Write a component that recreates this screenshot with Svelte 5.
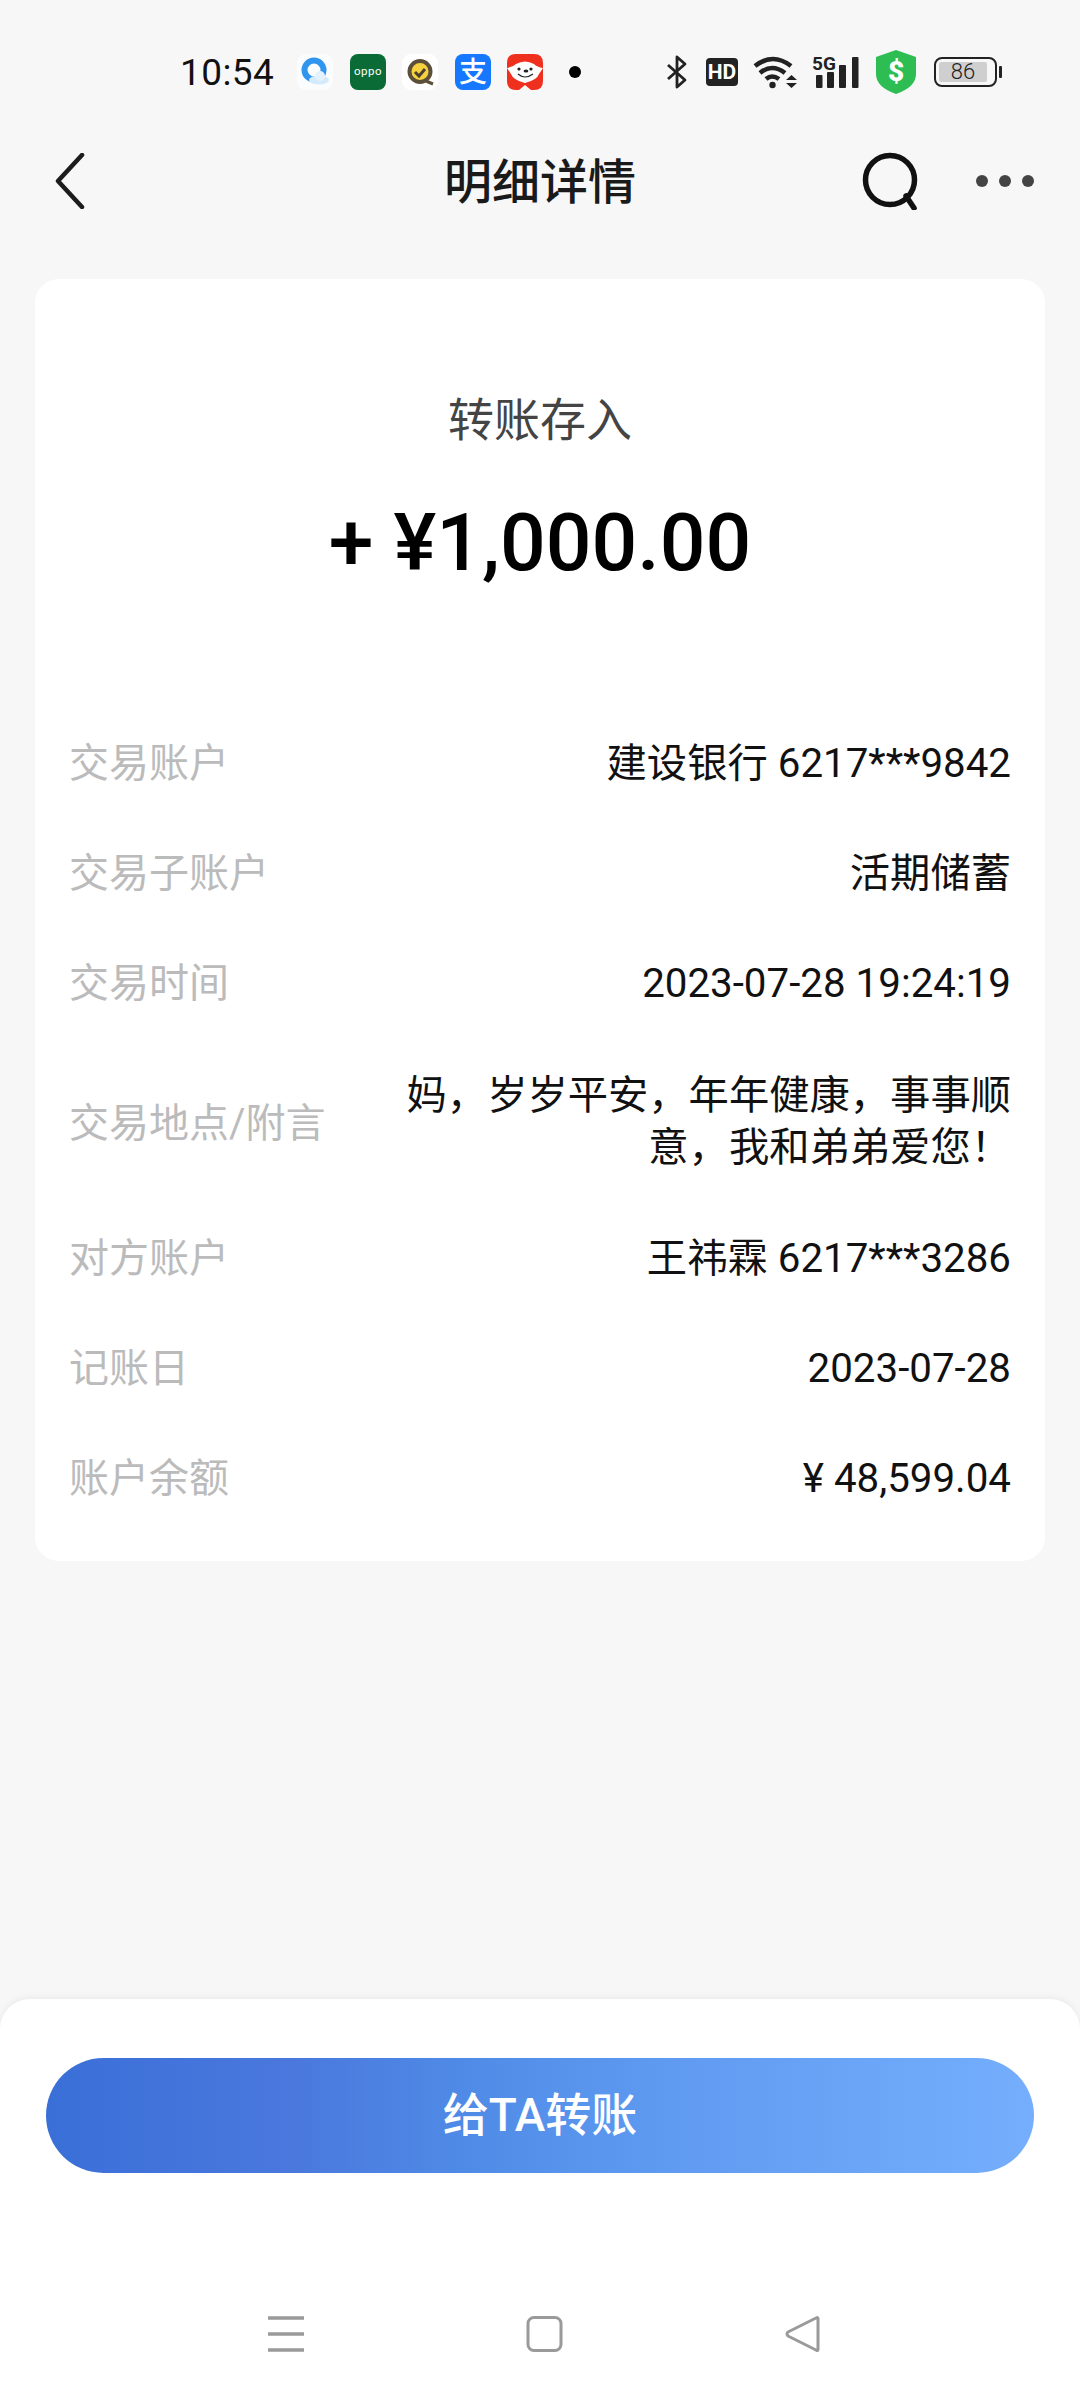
<script>
  const rows = [
    { label: '交易账户', value: '建设银行 6217***9842' },
    { label: '交易子账户', value: '活期储蓄' },
    { label: '交易时间', value: '2023-07-28 19:24:19' },
    { label: '交易地点/附言', value: '妈，岁岁平安，年年健康，事事顺意，我和弟弟爱您！', tall: true },
    { label: '对方账户', value: '王祎霖 6217***3286' },
    { label: '记账日', value: '2023-07-28' },
    { label: '账户余额', value: '¥ 48,599.04' }
  ];
</script>

<div class="page">
  <div class="status">
    <span class="time">10:54</span>
    <div class="apps">
      <svg class="app" viewBox="0 0 36 36">
        <rect width="36" height="36" rx="9" fill="#fbfcfe" />
        <circle cx="17" cy="16" r="9.5" fill="none" stroke="#2f95ee" stroke-width="6" />
        <ellipse cx="22" cy="26" rx="10" ry="4.5" fill="#d5ebfb" />
        <circle cx="23" cy="22" r="5" fill="#e4f2fc" />
      </svg>
      <svg class="app" viewBox="0 0 36 36">
        <rect width="36" height="36" rx="8" fill="#0b6b36" />
        <text x="18" y="21" class="oppo" text-anchor="middle">oppo</text>
      </svg>
      <svg class="app" viewBox="0 0 36 36">
        <rect width="36" height="36" rx="9" fill="#fff" />
        <circle cx="18" cy="17.5" r="10.5" fill="#f6d13f" stroke="#5c4f3a" stroke-width="4" />
        <path d="M13 18l4 4 6-7" fill="none" stroke="#4a3f30" stroke-width="3" />
        <path d="M24 27l7 3" stroke="#5c4f3a" stroke-width="3" />
      </svg>
      <svg class="app" viewBox="0 0 36 36">
        <rect width="36" height="36" rx="8" fill="#1677ff" />
        <text x="18" y="28" class="ali" text-anchor="middle">支</text>
      </svg>
      <svg class="app" viewBox="0 0 36 36">
        <path d="M9 0h18q9 0 9 9v18q0 9-9 9h-3l-6-5-6 5H9q-9 0-9-9V9q0-9 9-9z" fill="#f0301e" />
        <path d="M0 14q6-1 9-4 9-5 18 0 3 3 9 4l-4 6q-2 6-14 9-12-3-14-9z" fill="#fff" />
        <circle cx="12" cy="15" r="1.6" fill="#222" />
        <circle cx="24" cy="15" r="1.6" fill="#222" />
        <ellipse cx="19" cy="17" rx="2.4" ry="1.6" fill="#222" />
        <path d="M11 20q7 6 15 0" fill="none" stroke="#222" stroke-width="1.2" />
      </svg>
      <span class="dot"></span>
    </div>

    <div class="sys">
      <svg class="bt" viewBox="0 0 22 34">
        <path d="M2 10l17 15-8 7V2l8 7L2 24" fill="none" stroke="#222" stroke-width="2.8" stroke-linejoin="round" />
      </svg>
      <span class="hd">HD</span>
      <svg class="wifi" viewBox="0 0 46 34">
        <path d="M2 11q18-14 36 0M7 18q12-10 25 0M13 24q6-5 13 0" fill="none" stroke="#222" stroke-width="4.6" />
        <circle cx="19.5" cy="30" r="3.2" fill="#222" />
        <path d="M33 25h11l-5.500-5zM33 28h11l-5.500 5z" fill="#222" />
      </svg>
      <svg class="sig" viewBox="0 0 48 34">
        <text x="0" y="15" class="five">5G</text>
        <rect x="4" y="20" width="6.500" height="13" rx="1" fill="#222" />
        <rect x="15" y="17" width="7" height="16" rx="1" fill="#222" />
        <rect x="27" y="10" width="7" height="23" rx="1" fill="#222" />
        <rect x="40" y="2" width="6.500" height="31" rx="1" fill="#222" />
      </svg>
      <svg class="shield" viewBox="0 0 40 44">
        <path d="M20 0l20 7v17q0 13-20 20Q0 37 0 24V7z" fill="#2dbd52" />
        <text x="20" y="31" class="usd" text-anchor="middle">$</text>
      </svg>
      <div class="battery">
        <div class="cell"><span>86</span></div>
      </div>
      <span class="nub"></span>
    </div>
  </div>

  <header class="bar">
    <svg class="back" viewBox="0 0 30 56">
      <path d="M27 2L3 28l24 26" fill="none" stroke="#1c1c1c" stroke-width="4.5" stroke-linecap="round" stroke-linejoin="round" />
    </svg>
    <h1>明细详情</h1>
    <svg class="search" viewBox="0 0 58 58">
      <circle cx="28" cy="28" r="24.5" fill="none" stroke="#111" stroke-width="5.5" />
      <path d="M44 44l8 12" stroke="#111" stroke-width="5.5" stroke-linecap="round" />
    </svg>
    <div class="more"><i></i><i></i><i></i></div>
  </header>

  <section class="card">
    <div class="kind">转账存入</div>
    <div class="amount">+ ¥1,000.00</div>
    <div class="rows">
      {#each rows as row}
        <div class="row" class:tall={row.tall}>
          <span class="label">{row.label}</span>
          <span class="value">{row.value}</span>
        </div>
      {/each}
    </div>
  </section>

  <footer class="sheet">
    <button class="pay">给TA转账</button>
    <nav class="softkeys">
      <svg viewBox="0 0 38 36"><path d="M1 2h36M1 18h36M1 34h36" stroke="#9a9a9a" stroke-width="3.5" /></svg>
      <svg viewBox="0 0 38 36"><rect x="2" y="1.500" width="33" height="33" rx="6" fill="none" stroke="#9a9a9a" stroke-width="3" /></svg>
      <svg viewBox="0 0 38 36"><path d="M33 2.500v31q0 2-2 .5L3 20q-2-2 0-4L31 2q2-1 2 .5z" fill="none" stroke="#9a9a9a" stroke-width="3" stroke-linejoin="round" /></svg>
    </nav>
  </footer>
</div>

<style>
  :global(body) {
    background: #f7f7f7;
  }

  .page {
    width: 1080px;
    height: 2400px;
    display: flex;
    flex-direction: column;
    background: #f7f7f7;
    font-family: Roboto, "Noto Sans CJK SC", sans-serif;
    color: #111;
  }

  .status {
    height: 100px;
    padding: 44px 78px 0 180px;
    box-sizing: border-box;
    display: flex;
    align-items: center;
  }

  .time {
    width: 117px;
    font-size: 37px;
    letter-spacing: 0.4px;
    color: #111;
  }

  .apps {
    display: flex;
    align-items: center;
    gap: 16.5px;
  }

  .app {
    width: 36px;
    height: 36px;
    overflow: visible;
  }

  .oppo {
    font: 400 11.5px Roboto, sans-serif;
    letter-spacing: 0.5px;
    fill: #fff;
  }

  .ali {
    font: 500 28px "Noto Sans CJK SC", sans-serif;
    fill: #fff;
  }

  .dot {
    width: 12px;
    height: 12px;
    margin-left: 9px;
    border-radius: 50%;
    background: #000;
  }

  .sys {
    margin-left: auto;
    display: flex;
    align-items: center;
  }

  .bt {
    width: 22px;
    height: 34px;
  }

  .hd {
    width: 32px;
    height: 28px;
    margin-left: 18px;
    border-radius: 4px;
    background: #222;
    color: #fff;
    font: 700 21px/28px "Liberation Sans Narrow", Roboto, sans-serif;
    text-align: center;
  }

  .wifi {
    width: 46px;
    height: 34px;
    margin-left: 15px;
  }

  .sig {
    width: 48px;
    height: 34px;
    margin-left: 13px;
    overflow: visible;
  }

  .five {
    font: 700 19px "Liberation Sans Narrow", Roboto, sans-serif;
    fill: #222;
  }

  .shield {
    width: 40px;
    height: 44px;
    margin-left: 16px;
  }

  .usd {
    font: 900 28px Roboto, sans-serif;
    fill: #fff;
  }

  .battery {
    width: 63px;
    height: 30px;
    margin-left: 18px;
    padding: 3px;
    box-sizing: border-box;
    border: 2px solid #222;
    border-radius: 8px;
  }

  .cell {
    width: 48px;
    height: 20px;
    background: #cfcfcf;
    border-radius: 2px;
    font-size: 22px;
    line-height: 20px;
    text-align: center;
    color: #222;
    font-weight: 300;
  }

  .nub {
    width: 3px;
    height: 12px;
    margin-left: 2px;
    background: #222;
    border-radius: 1px;
  }

  .bar {
    height: 179px;
    padding: 0 46px 18px 55px;
    box-sizing: border-box;
    display: flex;
    align-items: center;
    position: relative;
  }

  .back {
    width: 30px;
    height: 56px;
  }

  h1 {
    position: absolute;
    left: 0;
    right: 0;
    margin: 0;
    padding-bottom: 6px;
    text-align: center;
    font-size: 48px;
    font-weight: 500;
    color: #1a1a1a;
  }

  .search {
    width: 58px;
    height: 58px;
    margin-left: auto;
  }

  .more {
    display: flex;
    gap: 11px;
    margin-left: 56px;
  }

  .more i {
    width: 12px;
    height: 12px;
    border-radius: 50%;
    background: #444;
  }

  .card {
    margin: 0 35px;
    height: 1282px;
    box-sizing: border-box;
    padding: 110px 34px 0;
    background: #fff;
    border-radius: 24px;
  }

  .kind {
    text-align: center;
    font-size: 46px;
    line-height: 62px;
    color: #444;
  }

  .amount {
    margin-top: 42px;
    text-align: center;
    font-size: 80.5px;
    line-height: 100px;
    font-weight: 500;
    color: #000;
  }

  .rows {
    margin-top: 116px;
  }

  .row {
    display: flex;
    justify-content: space-between;
    align-items: center;
    padding: 29px 0;
    gap: 40px;
    font-size: 40.3px;
    line-height: 52px;
  }

  .row.tall {
    padding: 30.5px 0;
  }

  .row.tall .label {
    padding-top: 4px;
  }

  .label {
    flex: none;
    font-size: 40px;
    color: #bbb;
  }

  .value {
    text-align: right;
    max-width: 610px;
    color: #111;
  }

  .sheet {
    margin-top: auto;
    height: 401px;
    box-sizing: border-box;
    padding: 59px 46px 0;
    background: #fff;
    border-radius: 30px 30px 0 0;
    box-shadow: 0 -2px 6px rgba(0, 0, 0, 0.05);
  }

  .pay {
    display: block;
    width: 100%;
    height: 115px;
    padding: 0 0 10px;
    border: none;
    border-radius: 58px;
    background: linear-gradient(90deg, #3a6fd8, #4a78dd 25%, #4f8ae6 42%, #5f9af1 62%, #74aefc);
    color: #fff;
    font-family: inherit;
    font-size: 46px;
    font-weight: 500;
  }

  .softkeys {
    margin: 143px 0 0 221px;
    display: flex;
    gap: 221px;
  }

  .softkeys svg {
    width: 38px;
    height: 36px;
  }
</style>
